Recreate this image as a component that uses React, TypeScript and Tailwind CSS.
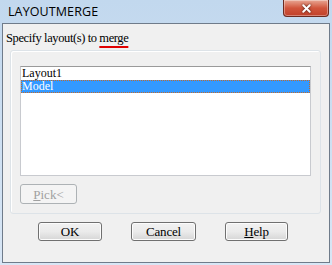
import { X } from "lucide-react";

const serif = "font-['Liberation_Serif','Times_New_Roman',serif]";

function DlgButton({ hot, rest, width }: { hot?: string; rest: string; width: string }) {
  return (
    <button
      className={`${width} h-[19px] flex items-center justify-center border border-[#707070] rounded-[3px] bg-gradient-to-b from-[#f2f2f2] via-[#ebebeb] to-[#d6d6d6] shadow-[inset_0_0_0_1px_#fcfcfc] text-[13px] text-black leading-none tracking-[-0.2px] ${serif}`}
    >
      {hot && <span className="underline underline-offset-1">{hot}</span>}
      {rest}
    </button>
  );
}

export default function App() {
  return (
    <div className="w-[332px] h-[265px] flex flex-col bg-gradient-to-b from-[#c2d8ee] to-[#d8e6f5] overflow-hidden">
      {/* title bar */}
      <div className="h-[23px] shrink-0 flex items-start justify-between pl-[8px] pr-[3px]">
        <span className="mt-[3px] text-[12.5px] text-black tracking-[0.1px] font-['Open_Sans','Noto_Sans',sans-serif]">
          LAYOUTMERGE
        </span>
        <div className="w-[46px] h-[17px] flex items-center justify-center rounded-b-[4px] border border-t-0 border-[#6b2a20] bg-gradient-to-b from-[#e7a694] via-[#d1553c] to-[#c0402a] shadow-[inset_0_0_0_1px_rgba(255,255,255,0.35)]">
          <X className="w-[13px] h-[13px] text-white drop-shadow-[0_0_1px_#3a1a14]" strokeWidth={3.5} />
        </div>
      </div>

      {/* client area */}
      <div className="flex-1 mx-[2px] mb-[2px] border border-[#6f7b8a] bg-[#f0f0f0] flex flex-col">
        <div className={`pl-[3px] pt-[6px] h-[26px] text-[12.5px] text-black leading-[16px] tracking-[-0.4px] ${serif}`}>
          Specify layout(s) to{" "}
          <span className="underline decoration-[#e00000] decoration-2 underline-offset-[4px]">merge</span>
        </div>

        {/* group box */}
        <div className="ml-[7px] mr-[8px] h-[164px] border border-[#dde3e8] rounded-[3px] shadow-[inset_1px_1px_0_#fff] flex flex-col px-[9px] pt-[15px]">
          <div className={`h-[110px] bg-white border border-[#c8cacf] border-t-[#9a9a9a] text-[12px] leading-[13px] ${serif}`}>
            <div className="h-[13px] pl-[1px] text-black">Layout1</div>
            <div className="h-[13px] pl-[1px] bg-[#3399ff] text-white outline-1 outline-dotted outline-[#c46a2a] -outline-offset-1">
              Model
            </div>
          </div>
          <button
            className={`mt-[8px] w-[57px] h-[20px] flex items-center justify-center border border-[#adb2b5] rounded-[3px] bg-[#f4f4f4] text-[13px] text-[#a0a0a0] leading-none ${serif}`}
          >
            <span className="underline underline-offset-1">P</span>ick&lt;
          </button>
        </div>

        {/* buttons */}
        <div className="flex pl-[35px] gap-[29px] mt-[8px]">
          <DlgButton rest="OK" width="w-[64px]" />
          <DlgButton rest="Cancel" width="w-[65px]" />
          <DlgButton hot="H" rest="elp" width="w-[63px]" />
        </div>
      </div>
    </div>
  );
}
